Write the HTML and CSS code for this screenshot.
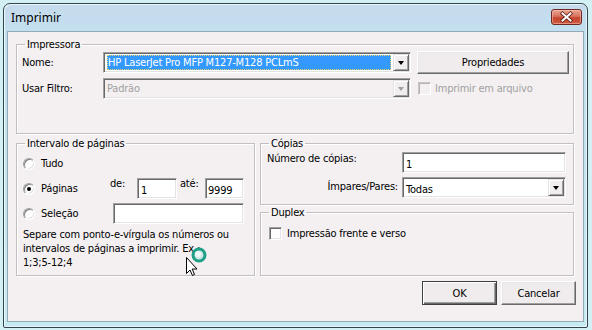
FILE: index.html
```html
<!DOCTYPE html>
<html lang="pt">
<head>
<meta charset="utf-8">
<title>Imprimir</title>
<link rel="stylesheet" href="styles.css">
</head>
<body>
<div class="window">
  <div class="titlebar">
    <span class="title">Imprimir</span>
    <span class="close">
      <svg width="29" height="14" viewBox="0 0 29 14">
        <path d="M10.5 3.5 L18.5 10.5 M18.5 3.5 L10.5 10.5" stroke="#5a1a10" stroke-width="3.6" stroke-linecap="square" fill="none"/>
        <path d="M10.5 3.5 L18.5 10.5 M18.5 3.5 L10.5 10.5" stroke="#ffffff" stroke-width="2" stroke-linecap="square" fill="none"/>
      </svg>
    </span>
  </div>
  <div class="client">
    <fieldset class="group">
      <legend>Impressora</legend>
      <div class="printer-grid">
        <span class="lbl">Nome:</span>
        <div class="combo">
          <span class="combo-text"><span class="sel">HP LaserJet Pro MFP M127-M128 PCLmS</span></span>
          <span class="drop"><span class="arrow"></span></span>
        </div>
        <button class="btn">Propriedades</button>
        <span class="lbl">Usar Filtro:</span>
        <div class="combo is-disabled">
          <span class="combo-text">Padrão</span>
          <span class="drop"><span class="arrow"></span></span>
        </div>
        <label class="check is-disabled"><span class="box"></span>Imprimir em arquivo</label>
      </div>
    </fieldset>

    <div class="mid">
      <fieldset class="group range">
        <legend>Intervalo de páginas</legend>
        <div class="range-body">
          <div class="row">
            <span class="opt"><span class="radio"></span>Tudo</span>
          </div>
          <div class="row">
            <span class="opt"><span class="radio on"></span>Páginas</span>
            <span class="mini-lbl de">de:</span>
            <span class="field w-from">1</span>
            <span class="mini-lbl ate">até:</span>
            <span class="field w-to">9999</span>
          </div>
          <div class="row">
            <span class="opt wide"><span class="radio"></span>Seleção</span>
            <span class="field w-sel"></span>
          </div>
          <p class="hint">Separe com ponto-e-vírgula os números ou<br>intervalos de páginas a imprimir. Ex.:<br>1;3;5-12;4</p>
        </div>
      </fieldset>

      <div class="right-col">
        <fieldset class="group copies">
          <legend>Cópias</legend>
          <div class="copies-grid">
            <span class="lbl top">Número de cópias:</span>
            <span class="field">1</span>
            <span class="lbl right">Ímpares/Pares:</span>
            <div class="combo white">
              <span class="combo-text">Todas</span>
              <span class="drop"><span class="arrow"></span></span>
            </div>
          </div>
        </fieldset>
        <fieldset class="group duplex">
          <legend>Duplex</legend>
          <div class="duplex-body">
            <label class="check"><span class="box white"></span>Impressão frente e verso</label>
          </div>
        </fieldset>
      </div>
    </div>

    <div class="actions">
      <button class="btn default">OK</button>
      <button class="btn">Cancelar</button>
    </div>
  </div>
</div>

<svg class="cursor" width="28" height="34" viewBox="0 0 28 34">
  <circle cx="15" cy="9" r="6" fill="#cfe8e6" stroke="#1f9e88" stroke-width="3"/>
  <circle cx="14" cy="8" r="3" fill="#f2fbfa" opacity="0.85"/>
  <path d="M2.5 11.5 V27.5 L6 24 L8.5 29.5 L10.5 28.5 L8.2 23 H13 Z" fill="#ffffff" stroke="#000000" stroke-width="1" stroke-linejoin="miter"/>
</svg>
</body>
</html>
```

FILE: styles.css
```css
* { box-sizing: border-box; }

html, body { margin: 0; padding: 0; }

body {
  background: #d3f1f5;
  font-family: "DejaVu Sans Condensed", "DejaVu Sans", sans-serif;
  font-stretch: condensed;
  font-size: 11px;
  letter-spacing: -0.2px;
  line-height: 13px;
  color: #000;
  position: relative;
  width: 592px;
  height: 330px;
  overflow: hidden;
}

.window {
  margin: 3px 0 0 3px;
  width: 585px;
  height: 325px;
  border: 1px solid #33444f;
  border-radius: 7px 7px 2px 2px;
  background: linear-gradient(#c6dbec, #c2dff0 30px, #c6eaf1);
  padding: 0 3px 5px 3px;
  display: flex;
  flex-direction: column;
  box-shadow: inset 1px 1px 0 #eaf8fb, inset -1px -1px 0 #e4f6f9;
}

.titlebar {
  height: 27px;
  flex: none;
  display: flex;
  justify-content: space-between;
  align-items: center;
  padding-left: 4px;
  margin-right: 2px;
}

.title {
  font-family: "Noto Sans", "Open Sans", sans-serif;
  font-stretch: normal;
  letter-spacing: 0;
  font-size: 12px;
  color: #000;
  padding-bottom: 1px;
}

.close {
  align-self: flex-start;
  margin-top: 5px;
  width: 31px;
  height: 16px;
  border: 1px solid #6d2a20;
  border-radius: 3px;
  background: linear-gradient(#eaa594, #d8725d 45%, #c5462f 55%, #cf5a40);
  display: flex;
  align-items: center;
  justify-content: center;
  box-shadow: inset 0 0 0 1px rgba(255, 200, 190, 0.5);
}

.client {
  flex: 1;
  background: #f4f0f2;
  border: 1px solid #93aab6;
  padding: 6px 9px 0 8px;
}

/* group boxes */
.group {
  margin: 0;
  padding: 0;
  border: 1px solid #c3bfc1;
  box-shadow: 1px 1px 0 #ffffff, inset 1px 1px 0 #ffffff;
  min-width: 0;
}

.group legend {
  margin-left: 8px;
  padding: 0 2px;
  line-height: 13px;
}

.printer-grid {
  display: grid;
  grid-template-columns: 75px 308px 152px;
  grid-template-rows: 23px 21px;
  column-gap: 6px;
  row-gap: 4px;
  align-items: center;
  padding: 0 4px 34px 5px;
}

.lbl { white-space: nowrap; }
.lbl.top { align-self: start; }
.lbl.right { text-align: right; margin-top: -3px; }

/* combo boxes */
.combo {
  height: 21px;
  display: flex;
  border: 1px solid;
  border-color: #a0a0a0 #ffffff #ffffff #a0a0a0;
  box-shadow: inset 1px 1px 0 #696969, inset -1px -1px 0 #e3e3e3;
  padding: 2px;
  background: #ffffff;
}

.combo-text {
  flex: 1;
  display: flex;
  align-items: center;
  padding-left: 1px;
  white-space: nowrap;
  overflow: hidden;
}

.sel {
  display: flex;
  align-items: center;
  height: 15px;
  width: 100%;
  padding-left: 1px;
  background: #3399ff;
  color: #ffffff;
  outline: 1px dotted #e9d46a;
  outline-offset: -1px;
}

.drop {
  width: 16px;
  flex: none;
  margin: -1px -1px -1px 2px;
  border: 1px solid;
  border-color: #e3e3e3 #696969 #696969 #e3e3e3;
  box-shadow: inset 1px 1px 0 #ffffff, inset -1px -1px 0 #a0a0a0;
  background: #f0eeef;
  display: flex;
  align-items: center;
  justify-content: center;
}

.arrow {
  width: 0;
  height: 0;
  border-left: 3.5px solid transparent;
  border-right: 3.5px solid transparent;
  border-top: 4px solid #000;
  margin-top: 1px;
}

.combo.is-disabled { background: #f4f0f2; }
.combo.is-disabled .combo-text { color: #a0a0a0; }
.combo.is-disabled .arrow { border-top-color: #a0a0a0; }

.combo.white .combo-text { padding-left: 1px; padding-top: 3px; }

/* checkbox */
.check {
  display: flex;
  align-items: center;
  white-space: nowrap;
  margin-left: 1px;
}

.box {
  width: 13px;
  height: 13px;
  flex: none;
  border: 1px solid;
  border-color: #a0a0a0 #ffffff #ffffff #a0a0a0;
  box-shadow: inset 1px 1px 0 #696969, inset -1px -1px 0 #e3e3e3;
  margin-right: 4px;
  background: #f4f0f2;
}

.box.white { background: #ffffff; margin-right: 5px; }

.check.is-disabled { color: #a0a0a0; }
.check.is-disabled .box {
  border-color: #c8c4c6 #ffffff #ffffff #c8c4c6;
  box-shadow: inset 1px 1px 0 #b8b4b6;
}

/* buttons */
.btn {
  font: inherit;
  letter-spacing: inherit;
  color: #000;
  height: 23px;
  padding: 0;
  border: 1px solid;
  border-color: #ffffff #696969 #696969 #ffffff;
  box-shadow: inset -1px -1px 0 #a0a0a0, inset 1px 1px 0 #eae7e8;
  background: #f0eced;
  text-align: center;
}

/* middle section */
.mid {
  margin-top: 3px;
  display: grid;
  grid-template-columns: 239px 314px;
  column-gap: 5px;
}

.range-body {
  padding: 3px 0 5px 6px;
  display: flex;
  flex-direction: column;
  gap: 4px;
}

.row {
  display: flex;
  align-items: center;
  height: 21px;
}

.opt {
  display: flex;
  align-items: center;
  width: 87px;
  flex: none;
}

.opt.wide { width: 90px; }

.radio {
  width: 12px;
  height: 12px;
  flex: none;
  border-radius: 50%;
  border: 1px solid;
  border-color: #a0a0a0 #ffffff #ffffff #a0a0a0;
  box-shadow: inset 1px 1px 0 #808080, inset -1px -1px 0 #e3e3e3;
  background: #ffffff;
  margin-right: 6px;
  display: flex;
  align-items: center;
  justify-content: center;
}

.radio.on::after {
  content: "";
  width: 4px;
  height: 4px;
  border-radius: 50%;
  background: #000;
}

.mini-lbl {
  align-self: flex-start;
  margin-top: -1px;
}

.de { width: 27px; }
.ate { width: 25px; margin-left: 3px; }

.field {
  height: 21px;
  border: 1px solid;
  border-color: #a0a0a0 #ffffff #ffffff #a0a0a0;
  box-shadow: inset 1px 1px 0 #696969, inset -1px -1px 0 #e3e3e3;
  background: #ffffff;
  padding: 5px 0 0 3px;
  line-height: 13px;
  flex: none;
  white-space: nowrap;
}

.w-from { width: 40px; }
.w-to { width: 39px; padding-left: 2px; }
.w-sel { width: 131px; }

.hint {
  margin: 0;
  line-height: 14px;
  white-space: nowrap;
}

.right-col {
  display: flex;
  flex-direction: column;
}

.copies-grid {
  display: grid;
  grid-template-columns: 1fr 164px;
  grid-template-rows: 21px 21px;
  column-gap: 4px;
  row-gap: 4px;
  align-items: center;
  padding: 2px 7px 6px 6px;
}

.duplex {
  margin-top: 1px;
  flex: 1;
}

.duplex-body {
  padding: 8px 0 0 7px;
}

.actions {
  margin-top: 5px;
  margin-right: -2px;
  display: flex;
  justify-content: flex-end;
  gap: 4px;
}

.actions .btn {
  width: 75px;
  height: 24px;
}

.btn.default {
  border-color: #404040;
  box-shadow: inset 1px 1px 0 #ffffff, inset -1px -1px 0 #696969, inset -2px -2px 0 #a0a0a0;
}

.cursor {
  position: absolute;
  left: 184px;
  top: 246px;
}
```
